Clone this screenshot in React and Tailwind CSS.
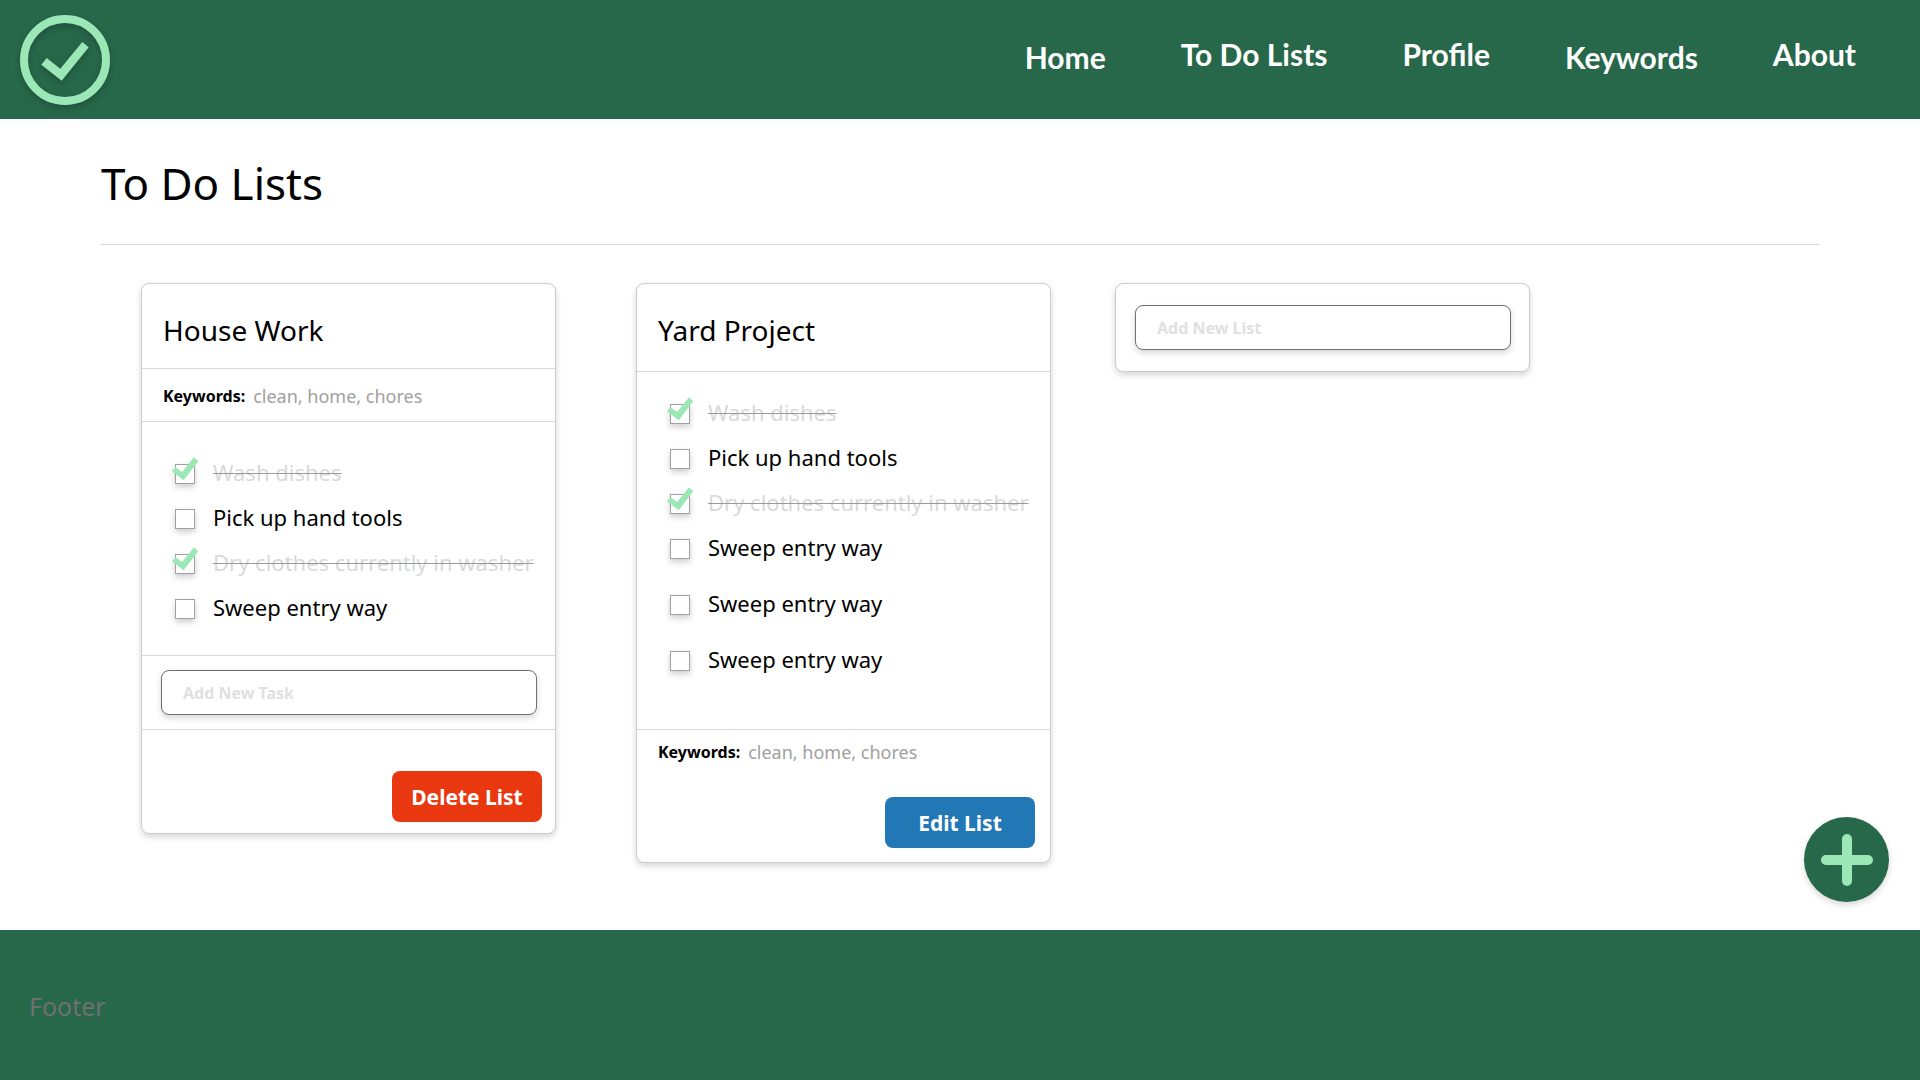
import { useState } from "react";

const NAV = [
  { name: "Home", align: "self-end" },
  { name: "To Do Lists", align: "self-start" },
  { name: "Profile", align: "self-start" },
  { name: "Keywords", align: "self-end" },
  { name: "About", align: "self-start" },
];

const HOUSE_TASKS = [
  { text: "Wash dishes", done: true },
  { text: "Pick up hand tools", done: false },
  { text: "Dry clothes currently in washer", done: true },
  { text: "Sweep entry way", done: false },
];

const YARD_TASKS = [
  ...HOUSE_TASKS,
  { text: "Sweep entry way", done: false, spaced: true },
  { text: "Sweep entry way", done: false, spaced: true },
];

function Logo() {
  return (
    <svg viewBox="0 0 90 90" className="size-[90px] drop-shadow-[0_3px_3px_rgba(0,0,0,0.2)]" aria-hidden="true">
      <circle cx="45" cy="45" r="41" fill="none" stroke="#9be8b6" strokeWidth="8" />
      <path d="M21.3 49.7 26.7 43 40.3 53.7 62.3 27 68.7 32.3 41.7 65.7Z" fill="#9be8b6" />
    </svg>
  );
}

function Header() {
  return (
    <header className="flex h-[119px] items-start justify-between bg-[#27674a] pt-[15px] pr-16 pl-5">
      <a href="#home" aria-label="Home page">
        <Logo />
      </a>
      <nav className="mt-[19px] flex h-[43px] gap-x-[75px] font-[Lato,sans-serif] text-[30px] leading-10 font-bold text-white">
        {NAV.map(({ name, align }) => (
          <a key={name} href={`#${name.toLowerCase().replaceAll(" ", "-")}`} className={align}>
            {name}
          </a>
        ))}
      </nav>
    </header>
  );
}

function Card({ className, children }) {
  return (
    <section
      className={`w-[415px] shrink-0 rounded-lg border border-[#cccccc] bg-white shadow-[0_3px_6px_rgba(0,0,0,0.16)] ${className ?? ""}`}
    >
      {children}
    </section>
  );
}

function Task({ id, task }) {
  const [done, setDone] = useState(task.done);
  return (
    <li className={`flex h-7 items-center ${task.spaced ? "mt-7" : "mt-[17px] first:mt-0"}`}>
      <span className="relative size-5">
        <input
          id={id}
          type="checkbox"
          checked={done}
          onChange={(e) => setDone(e.target.checked)}
          className="block size-5 appearance-none border border-[#a0a0a0] bg-white shadow-[0_3px_6px_rgba(0,0,0,0.2)]"
        />
        {done && (
          <svg
            viewBox="0 0 27 24"
            className="pointer-events-none absolute -top-[7px] -left-[3px] h-6 w-[27px] max-w-none"
            aria-hidden="true"
          >
            <path d="M0 14.3 3.7 10.3 10 15 22 .3 26.3 4.3 11.7 23.3Z" fill="#9be8b6" />
          </svg>
        )}
      </span>
      <label
        htmlFor={id}
        className={`pb-1 pl-[18px] text-[22px] leading-7 whitespace-nowrap ${
          done ? "text-[#d9d9d9] line-through decoration-[#9a9a9a] decoration-1" : "text-black"
        }`}
      >
        {task.text}
      </label>
    </li>
  );
}

function TaskList({ name, tasks, className }) {
  return (
    <ul className={`pl-[33px] ${className}`}>
      {tasks.map((task, i) => (
        <Task key={i} id={`${name}-${i}`} task={task} />
      ))}
    </ul>
  );
}

function Keywords({ className }) {
  return (
    <p className={`flex items-center gap-2 pl-[21px] leading-6 ${className}`}>
      <strong className="text-base leading-6 font-bold text-black">Keywords:</strong>
      <span className="text-lg leading-6 text-[#a0a0a0]">clean, home, chores</span>
    </p>
  );
}

function TextField({ label }) {
  return (
    <input
      type="text"
      aria-label={label}
      placeholder={label}
      className="block h-[45px] w-full rounded-lg border border-[#707070] bg-white px-[21px] text-base font-bold shadow-[0_3px_6px_rgba(0,0,0,0.16)] placeholder:text-[#e0e0e0]"
    />
  );
}

const BUTTON = "h-[51px] w-[150px] rounded-lg text-[21px] leading-7 font-bold text-white";

export default function App() {
  return (
    <div className="flex min-h-screen flex-col bg-white font-['Noto_Sans',sans-serif] text-black">
      <Header />

      <main className="flex-1 px-[101px] pb-16">
        <h1 className="border-b border-[#d9d9d9] pt-[34px] pb-[31px] text-[44px] leading-[60px]">To Do Lists</h1>

        <div className="flex flex-wrap items-start gap-y-10 pt-[38px] pl-10">
          <Card className="mr-20">
            <h2 className="border-b border-[#d9d9d9] pt-[26px] pb-[18px] pl-[21px] text-[28px] leading-10">
              House Work
            </h2>
            <Keywords className="border-b border-[#d9d9d9] pt-[15px] pb-[13px]" />
            <TaskList name="house" tasks={HOUSE_TASKS} className="pt-[38px] pb-8" />
            <div className="border-y border-[#d9d9d9] py-[14px] pr-[18px] pl-[19px]">
              <TextField label="Add New Task" />
            </div>
            <div className="flex justify-end pt-[41px] pr-[13px] pb-[11px]">
              <button type="button" className={`${BUTTON} bg-[#e93810]`}>
                Delete List
              </button>
            </div>
          </Card>

          <Card className="mr-16">
            <h2 className="border-b border-[#d9d9d9] pt-[26px] pb-[21px] pl-[21px] text-[28px] leading-10">
              Yard Project
            </h2>
            <TaskList name="yard" tasks={YARD_TASKS} className="border-b border-[#d9d9d9] pt-7 pb-[54px]" />
            <Keywords className="pt-[10px]" />
            <div className="flex justify-end pt-[33px] pr-[15px] pb-[14px]">
              <button type="button" className={`${BUTTON} bg-[#2277b5]`}>
                Edit List
              </button>
            </div>
          </Card>

          <Card className="py-[21px] pr-[18px] pl-[19px]">
            <TextField label="Add New List" />
          </Card>
        </div>
      </main>

      <button
        type="button"
        aria-label="Add list"
        className="fixed right-[31px] bottom-[178px] flex size-[85px] items-center justify-center rounded-full bg-[#27674a] shadow-[0_3px_6px_rgba(0,0,0,0.16)]"
      >
        <svg viewBox="0 0 52 52" className="size-[52px]" aria-hidden="true">
          <path d="M26 5V47M5 26H47" stroke="#9be8b6" strokeWidth="10" strokeLinecap="round" />
        </svg>
      </button>

      <footer className="flex h-[150px] items-center bg-[#27674a] pt-px pl-[29px] text-[25px] leading-9 text-[#707070]">
        Footer
      </footer>
    </div>
  );
}
